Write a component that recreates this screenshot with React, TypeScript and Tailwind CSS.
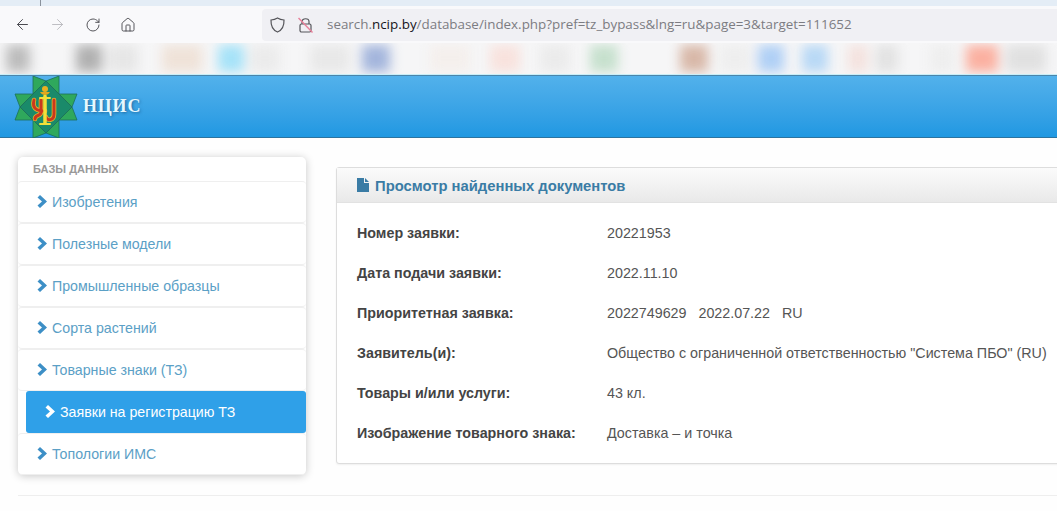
import React from "react";
import { ArrowLeft, ArrowRight, RotateCw, Home } from "lucide-react";

const BLOBS = [
  "ml-[6px] w-[24px] bg-[#bcbcbc]",
  "ml-[46px] w-[26px] bg-[#b0b0b0]",
  "ml-[6px] w-[30px] bg-[#e6e6e6]",
  "ml-[24px] w-[40px] bg-[#efe2d8]",
  "ml-[16px] w-[26px] bg-[#a5e2f8]",
  "ml-[6px] w-[30px] bg-[#ebebeb]",
  "ml-[30px] w-[40px] bg-[#e8e8e8]",
  "ml-[12px] w-[28px] bg-[#a3b5dc]",
  "ml-[40px] w-[40px] bg-[#f4efec]",
  "ml-[20px] w-[30px] bg-[#f8e2dd]",
  "ml-[20px] w-[30px] bg-[#ebebeb]",
  "ml-[20px] w-[28px] bg-[#c6e0cd]",
  "ml-[62px] w-[28px] bg-[#d8b8a8]",
  "ml-[12px] w-[30px] bg-[#eeeeee]",
  "ml-[8px] w-[26px] bg-[#afcff5]",
  "ml-[18px] w-[26px] bg-[#b8d8f5]",
  "ml-[20px] w-[20px] bg-[#f4e2de]",
  "ml-[8px] w-[22px] bg-[#e2e2e2]",
  "ml-[32px] w-[24px] bg-[#eeeeee]",
  "ml-[12px] w-[32px] bg-[#fbb0a0]",
  "ml-[8px] w-[40px] bg-[#e0e0e0]",
];

const MENU = [
  "Изобретения",
  "Полезные модели",
  "Промышленные образцы",
  "Сорта растений",
  "Товарные знаки (ТЗ)",
  "Заявки на регистрацию ТЗ",
  "Топологии ИМС",
];

const ROWS = [
  ["Номер заявки:", "20221953"],
  ["Дата подачи заявки:", "2022.11.10"],
  ["Приоритетная заявка:", "2022749629\u00a0\u00a0\u00a02022.07.22\u00a0\u00a0\u00a0RU"],
  ["Заявитель(и):", 'Общество с ограниченной ответственностью "Система ПБО" (RU)'],
  ["Товары и/или услуги:", "43 кл."],
  ["Изображение товарного знака:", "Доставка – и точка"],
];

const Chevron = ({ active }: { active: boolean }) => (
  <svg
    width="10"
    height="13"
    viewBox="0 0 10 13"
    className={active ? "mb-[2px] shrink-0 fill-white" : "mb-[2px] shrink-0 fill-[#3d8fc6]"}
  >
    <path d="M3 0 L10 6.5 L3 13 L0.5 10.5 L5 6.5 L0.5 2.5 Z" />
  </svg>
);

const Logo = () => (
  <svg width="64" height="62" viewBox="0 0 64 62" className="shrink-0">
    <path d="M32 5 L58 31 L32 57 L6 31 Z" fill="#1a8a6a" stroke="#17604f" strokeWidth="1" />
    <g fill="#2fa85c" stroke="#1c6f5c" strokeWidth="0.8">
      <path d="M19 0 L19 18 L32 5 Z" />
      <path d="M45 0 L45 18 L32 5 Z" />
      <path d="M63 18 L45 18 L58 31 Z" />
      <path d="M63 44 L45 44 L58 31 Z" />
      <path d="M45 62 L45 44 L32 57 Z" />
      <path d="M19 62 L19 44 L32 57 Z" />
      <path d="M1 44 L19 44 L6 31 Z" />
      <path d="M1 18 L19 18 L6 31 Z" />
    </g>
    <g fill="none" strokeLinecap="round">
      <g stroke="#e3b62a" strokeWidth="4.6">
        <path d="M20 24 C18 32 22 35 31 35 M27 24 L27 36 C27 41 21 38 21 43" />
        <path d="M40 24 L40 38 C40 45 33 45 32 41" />
      </g>
      <g stroke="#c9381e" strokeWidth="3">
        <path d="M20 24 C18 32 22 35 31 35 M27 24 L27 36 C27 41 21 38 21 43" />
        <path d="M40 24 L40 38 C40 45 33 45 32 41" />
      </g>
      <path d="M31 20 L31 47" stroke="#f3e03a" strokeWidth="3.5" />
      <path d="M26 22 L36 22 M26 48 L36 48" stroke="#f3e03a" strokeWidth="2" />
    </g>
    <path d="M26 16 C28 20 34 20 36 16 Z" fill="#e2a81e" />
    <circle cx="31" cy="13" r="3" fill="#e8b020" />
  </svg>
);

const DocIcon = () => (
  <svg width="12" height="14" viewBox="0 0 12 14" className="shrink-0 fill-[#3a7ca5]">
    <path d="M0 0 H7 V5 H12 V14 H0 Z" />
    <path d="M8 0 L12 4 H8 Z" />
  </svg>
);

const ShieldIcon = () => (
  <svg width="15" height="16" viewBox="0 0 15 16" fill="none" stroke="#55555a" strokeWidth="1.2" className="shrink-0">
    <path d="M7.5 1 C5.5 2.2 3.2 2.8 1 3 C0.8 8.5 2.5 13 7.5 15 C12.5 13 14.2 8.5 14 3 C11.8 2.8 9.5 2.2 7.5 1 Z" />
  </svg>
);

const StruckLock = () => (
  <svg width="15" height="16" viewBox="0 0 15 16" fill="none" className="shrink-0">
    <path d="M4 7 V4.5 C4 0.8 11 0.8 11 4.5 V7" stroke="#55555a" strokeWidth="1.2" />
    <rect x="2" y="7" width="11" height="8" rx="1.5" stroke="#55555a" strokeWidth="1.2" />
    <path d="M0.5 1 L14.5 15.5" stroke="#e8809a" strokeWidth="1.4" />
  </svg>
);

export default function App() {
  return (
    <div className="h-[511px] w-full overflow-hidden bg-[#fefefe] font-['Liberation_Sans',Arial,sans-serif] text-[14.3px]">
      <div className="h-[6px] bg-[#e4edf6] pl-[40px]">
        <div className="h-full w-px bg-[#8a929c]" />
      </div>

      <div className="flex h-[37px] items-center bg-[#f9f9fb] pl-[14px]">
        <ArrowLeft size={17} strokeWidth={1.4} className="text-[#4a4a50]" />
        <ArrowRight size={17} strokeWidth={1.2} className="ml-[18px] text-[#b4b4b8]" />
        <RotateCw size={16} strokeWidth={1.4} className="ml-[19px] text-[#4a4a50]" />
        <Home size={16} strokeWidth={1.4} className="ml-[19px] text-[#4a4a50]" />
        <div className="ml-[126px] flex h-[32px] flex-1 items-center rounded-l-[4px] bg-[#f0f0f4] pl-[8px]">
          <ShieldIcon />
          <span className="ml-[13px]">
            <StruckLock />
          </span>
          <span className="ml-[14px] font-['Open_Sans',sans-serif] text-[13.4px] text-[#7c7c82]">
            search.<span className="text-[#15141a]">ncip.by</span>/database/index.php?pref=tz_bypass&amp;lng=ru&amp;page=3&amp;target=111652
          </span>
        </div>
      </div>

      <div className="h-[32px] overflow-hidden border-b border-[#c8eef8] bg-[#f6f6f7]">
        <div className="flex h-full py-[2px] blur-[6px]">
          {BLOBS.map((c) => (
            <div key={c} className={c + " shrink-0"} />
          ))}
        </div>
      </div>

      <header className="flex h-[63px] items-center gap-[5px] border-y border-t-[#4a85ab] border-b-[#2c739f] bg-gradient-to-b from-[#52b1eb] to-[#1f98e2] pl-[14px]">
        <Logo />
        <span className="font-['Liberation_Serif',serif] text-[18px] font-bold tracking-[0.8px] text-[#e6f8ff] [text-shadow:1px_1px_3px_rgba(0,40,80,0.5)]">
          НЦИС
        </span>
      </header>

      <div className="flex items-start pl-[18px] pt-[19px]">
        <nav className="w-[288px] shrink-0 rounded-[5px] bg-white text-[14.2px] shadow-[0_1px_8px_rgba(0,0,0,0.22)]">
          <div className="flex h-[24px] items-center pl-[15px] text-[11px] font-bold text-[#999]">БАЗЫ ДАННЫХ</div>
          {MENU.map((m, i) => (
            <div
              key={m}
              className={
                i === 5
                  ? "ml-[8px] flex h-[42px] items-center gap-[5px] rounded-[3px] bg-[#2fa0e8] pl-[19px] text-white"
                  : "flex h-[42px] items-center gap-[5px] rounded-[4px] border-y border-[#efefef] pl-[19px] text-[#5ba0c6]"
              }
            >
              <Chevron active={i === 5} />
              <span className="pt-[2px]">{m}</span>
            </div>
          ))}
        </nav>

        <section className="ml-[30px] mt-[10px] w-[760px] shrink-0 rounded-[3px] border border-[#dddddd] bg-white shadow-[0_1px_2px_rgba(0,0,0,0.06)]">
          <div className="flex h-[35px] items-center gap-[6px] border-b border-[#e2e2e2] bg-gradient-to-b from-[#fbfbfb] to-[#e9e9e9] pl-[20px]">
            <DocIcon />
            <h2 className="pt-[2px] text-[14.8px] font-bold text-[#3a7ca5]">Просмотр найденных документов</h2>
          </div>
          <div className="py-[10px] pl-[20px]">
            {ROWS.map(([k, v]) => (
              <div key={k} className="grid h-[40px] grid-cols-[250px_1fr] items-center pt-[2px]">
                <span className="font-bold text-[#444]">{k}</span>
                <span className="text-[#555]">{v}</span>
              </div>
            ))}
          </div>
        </section>
      </div>

      <div className="ml-[18px] mt-[20px] border-t border-[#eeeeee]" />
    </div>
  );
}
